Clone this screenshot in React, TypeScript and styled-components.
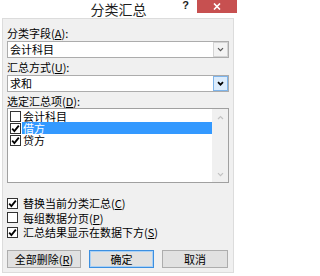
import React from "react";
import styled, { createGlobalStyle } from "styled-components";

const GlobalStyle = createGlobalStyle`
  html, body {
    margin: 0;
    padding: 0;
    background: #ffffff;
  }
  body {
    font-family: "Noto Sans CJK SC", "Liberation Sans", sans-serif;
    font-size: 11px;
    color: #000;
  }
`;

const Window = styled.div`
  width: 237px;
  height: 276px;
  background: #ffffff;
  display: flex;
  flex-direction: column;
`;

const TitleBar = styled.div`
  height: 18px;
  display: grid;
  grid-template-columns: 1fr auto 1fr;
  align-items: start;
`;

const Title = styled.div`
  grid-column: 2;
  font-size: 14px;
  line-height: 18px;
  color: #1e1e1e;
`;

const Controls = styled.div`
  grid-column: 3;
  display: flex;
  justify-content: flex-end;
  align-items: flex-start;
`;

const Help = styled.span`
  font-family: "Liberation Sans", sans-serif;
  font-weight: bold;
  font-size: 11px;
  line-height: 11px;
  color: #222;
  margin-right: 8px;
`;

const CloseButton = styled.div`
  width: 40px;
  height: 13px;
  background: #c75050;
  display: flex;
  align-items: center;
  justify-content: center;
`;

const Client = styled.div`
  margin: 0 3px 0 2px;
  height: 255px;
  box-sizing: border-box;
  border: 1px solid #dcdcdc;
  background: #f0f0f0;
  padding: 7px 4px 0 4px;
  display: flex;
  flex-direction: column;
`;

const Label = styled.div<{ $gap?: number }>`
  height: 14px;
  line-height: 14px;
  margin-top: ${(p) => p.$gap ?? 0}px;
  white-space: nowrap;
`;

const Key = styled.span`
  text-decoration: underline;
  text-underline-offset: 1px;
`;

const Select = styled.div`
  margin-top: 1px;
  height: 17px;
  box-sizing: border-box;
  border: 1px solid #acacac;
  background: #fff;
  display: flex;
  align-items: stretch;
`;

const SelectValue = styled.div`
  flex: 1;
  padding-left: 2px;
  line-height: 15px;
`;

const ArrowBox = styled.div<{ $active?: boolean }>`
  width: 15px;
  box-sizing: border-box;
  border: 1px solid ${(p) => (p.$active ? "#7eb4ea" : "#d4d4d4")};
  background: ${(p) => (p.$active ? "#dcecfc" : "#f3f3f3")};
  display: flex;
  align-items: center;
  justify-content: center;
`;

const ListBox = styled.div`
  height: 75px;
  box-sizing: border-box;
  border: 1px solid #a0a0a0;
  background: #fff;
  padding: 1px 0 1px 0;
  display: flex;
`;

const Items = styled.div`
  flex: 1;
  display: flex;
  flex-direction: column;
`;

const Item = styled.div`
  height: 12px;
  display: flex;
  align-items: center;
  padding-left: 2px;
`;

const ItemText = styled.div<{ $selected?: boolean }>`
  flex: 1;
  height: 12px;
  line-height: 12px;
  margin-left: 1px;
  padding-left: 1px;
  background: ${(p) => (p.$selected ? "#3399ff" : "transparent")};
  color: ${(p) => (p.$selected ? "#fff" : "#000")};
`;

const ScrollBar = styled.div`
  width: 16px;
  margin-top: -1px;
  margin-bottom: -1px;
  background: #f0f0f0;
  display: flex;
  flex-direction: column;
  justify-content: space-between;
  align-items: center;
  padding: 6px 0 5px 0;
`;

const Box = styled.div`
  width: 11px;
  height: 11px;
  box-sizing: border-box;
  border: 1px solid #333;
  background: #fff;
  display: flex;
  align-items: center;
  justify-content: center;
  flex-shrink: 0;
`;

const Options = styled.div`
  margin-top: 13px;
  display: flex;
  flex-direction: column;
`;

const Option = styled.div`
  height: 14.5px;
  display: flex;
  align-items: center;
  gap: 5px;
  white-space: nowrap;
`;

const Buttons = styled.div`
  margin-top: 10px;
  display: flex;
  gap: 8px;
`;

const Button = styled.div<{ $w: number; $default?: boolean }>`
  width: ${(p) => p.$w}px;
  height: 18px;
  box-sizing: border-box;
  border: 1px solid ${(p) => (p.$default ? "#3c8fe0" : "#adadad")};
  box-shadow: ${(p) => (p.$default ? "inset 0 0 0 1px #a9d0f5" : "none")};
  background: #e1e1e1;
  display: flex;
  align-items: center;
  justify-content: center;
  line-height: 16px;
`;

const Check = () => (
  <svg width="9" height="9" viewBox="0 0 9 9">
    <path d="M1.2 4.6 L3.4 7 L7.8 1.6" fill="none" stroke="#000" strokeWidth="1.8" />
  </svg>
);

const Chevron = ({ up, color = "#333", w = 1.2 }: { up?: boolean; color?: string; w?: number }) => (
  <svg width="7" height="5" viewBox="0 0 7 5">
    <path
      d={up ? "M1 4 L3.5 1.5 L6 4" : "M1 1.2 L3.5 3.7 L6 1.2"}
      fill="none"
      stroke={color}
      strokeWidth={w}
    />
  </svg>
);

const fields = [
  { name: "会计科目", checked: false, selected: false },
  { name: "借方", checked: true, selected: true },
  { name: "贷方", checked: true, selected: false },
];

export default function App() {
  return (
    <>
      <GlobalStyle />
      <Window>
        <TitleBar>
          <Title>分类汇总</Title>
          <Controls>
            <Help>?</Help>
            <CloseButton>
              <svg width="8" height="7" viewBox="0 0 8 7">
                <path d="M1 0.5 L7 6.5 M7 0.5 L1 6.5" stroke="#fff" strokeWidth="1.6" />
              </svg>
            </CloseButton>
          </Controls>
        </TitleBar>
        <Client>
          <Label>
            分类字段(<Key>A</Key>):
          </Label>
          <Select>
            <SelectValue>会计科目</SelectValue>
            <ArrowBox>
              <Chevron color="#555" />
            </ArrowBox>
          </Select>
          <Label $gap={2}>
            汇总方式(<Key>U</Key>):
          </Label>
          <Select>
            <SelectValue>求和</SelectValue>
            <ArrowBox $active>
              <Chevron color="#000" w={1.7} />
            </ArrowBox>
          </Select>
          <Label $gap={2}>
            选定汇总项(<Key>D</Key>):
          </Label>
          <ListBox>
            <Items>
              {fields.map((f) => (
                <Item key={f.name}>
                  <Box>{f.checked && <Check />}</Box>
                  <ItemText $selected={f.selected}>{f.name}</ItemText>
                </Item>
              ))}
            </Items>
            <ScrollBar>
              <Chevron up color="#c2c2c2" />
              <Chevron color="#c2c2c2" />
            </ScrollBar>
          </ListBox>
          <Options>
            <Option>
              <Box>
                <Check />
              </Box>
              <span>
                替换当前分类汇总(<Key>C</Key>)
              </span>
            </Option>
            <Option>
              <Box />
              <span>
                每组数据分页(<Key>P</Key>)
              </span>
            </Option>
            <Option>
              <Box>
                <Check />
              </Box>
              <span>
                汇总结果显示在数据下方(<Key>S</Key>)
              </span>
            </Option>
          </Options>
          <Buttons>
            <Button $w={74}>
              全部删除(<Key>R</Key>)
            </Button>
            <Button $w={65} $default>
              确定
            </Button>
            <Button $w={66}>取消</Button>
          </Buttons>
        </Client>
      </Window>
    </>
  );
}
